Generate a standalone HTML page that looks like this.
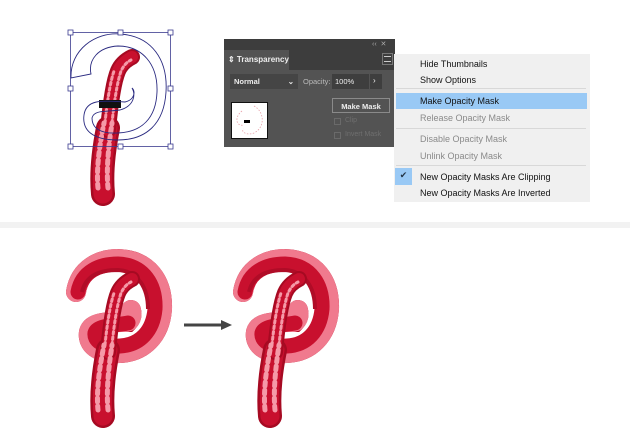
<!DOCTYPE html>
<html><head><meta charset="utf-8"><style>
*{margin:0;padding:0;box-sizing:border-box}
body{width:630px;height:444px;background:#fff;position:relative;overflow:hidden;font-family:"Liberation Sans",sans-serif}
.a{position:absolute}
.panel{left:224px;top:39px;width:171px;height:108px;background:#535353}
.menu{left:394px;top:54px;width:196px;height:148px;background:#f0f0f0;font-size:9px;color:#111}
.mi{position:absolute;left:26px}
.dis{color:#8a8a8a}
</style></head><body>
<div class="a" style="left:0;top:222px;width:630px;height:6px;background:#f2f2f2"></div>

<svg class="a" style="left:0;top:0" width="630" height="444">
<defs>
<g id="stem">
 <path d="M103,416 C101,395 104,370 108,350" fill="none" stroke="#a60a22" stroke-width="24" stroke-linecap="round"/>
 <path d="M103,416 C101,395 104,370 108,350" fill="none" stroke="#c8102e" stroke-width="19" stroke-linecap="round"/>
 <path d="M108,352 C110,330 113,305 118,293 C121,286 126,282 132,279" fill="none" stroke="#a60a22" stroke-width="16" stroke-linecap="round"/>
 <path d="M108,352 C110,330 113,305 118,293 C121,286 126,282 132,279" fill="none" stroke="#c8102e" stroke-width="12" stroke-linecap="round"/>
 <path d="M98,410 C96,390 100,365 104,345" fill="none" stroke="#f59aa8" stroke-width="5" stroke-dasharray="4 4" stroke-linecap="round"/>
 <path d="M108,410 C106,390 109,365 112,345" fill="none" stroke="#f59aa8" stroke-width="5" stroke-dasharray="4 4" stroke-linecap="round"/>
 <path d="M105,345 C107,325 110,305 114,293" fill="none" stroke="#f59aa8" stroke-width="3" stroke-dasharray="2.5 3" stroke-linecap="round"/>
 <path d="M112,345 C114,325 117,305 121,293 C124,287 127,284 131,282" fill="none" stroke="#f59aa8" stroke-width="3" stroke-dasharray="2.5 3" stroke-linecap="round"/>
</g>
<g id="loop">
 <path id="lp" d="M76,292 C80,268 100,259 118,259 C148,260 163,281 162,309 C160,336 143,352 120,353 C97,354 87,344 89,332 C92,321 110,322 128,322 C132,318 132,314 131,310" fill="none" stroke="#b80e2a" stroke-width="20" stroke-linecap="round"/>
 <path d="M76,292 C80,268 100,259 118,259 C148,260 163,281 162,309 C160,336 143,352 120,353 C97,354 87,344 89,332 C92,321 110,322 128,322 C132,318 132,314 131,310" fill="none" stroke="#f07a8e" stroke-width="20" stroke-linecap="round" stroke-dasharray="9 3"/>
 <path d="M78,292 C82,271 100,264 118,264 C144,265 156,285 155,309 C153,331 140,345 120,346 C101,347 94,340 95,333 C97,326 110,326 128,323" fill="none" stroke="#c8102e" stroke-width="15" stroke-linecap="round"/>
 <path d="M82,292 C86,275 100,270 118,270 C138,271 148,288 148,309" fill="none" stroke="#b00c27" stroke-width="4"/>
</g>
<g id="P"><use href="#loop"/><use href="#stem"/></g>
</defs>
<use href="#P"/>
<use href="#P" x="167"/>
<line x1="184" y1="325" x2="222" y2="325" stroke="#444" stroke-width="3"/>
<path d="M221,320 L232,325 L221,330 Z" fill="#444"/>
<use href="#stem" y="-222"/>
<rect x="99" y="100" width="22" height="8" fill="#111"/>
<path d="M71,78 C70,50 95,32 120,34 C152,36 168,60 166,92 C164,125 145,140 118,140 C92,140 82,130 84,115 C86,100 100,100 125,102 C134,100 136,92 132,88 C136,95 134,106 120,110 C104,112 94,110 92,118 C92,128 100,134 118,133 C142,132 156,118 157,92 C158,64 142,46 118,46 C98,47 88,60 91,74 Z" fill="none" stroke="#2a2a80" stroke-width="0.9"/>
<rect x="70.5" y="32.5" width="100" height="114" fill="none" stroke="#3b3b8f" stroke-width="0.8"/>
<g fill="#fff" stroke="#3b3b8f" stroke-width="0.8">
<rect x="68" y="30" width="5" height="5"/><rect x="118" y="30" width="5" height="5"/><rect x="168" y="30" width="5" height="5"/>
<rect x="68" y="86" width="5" height="5"/><rect x="168" y="86" width="5" height="5"/>
<rect x="68" y="144" width="5" height="5"/><rect x="118" y="144" width="5" height="5"/><rect x="168" y="144" width="5" height="5"/>
</g>
</svg>

<div class="a panel">
 <div class="a" style="left:0;top:0;width:171px;height:31px;background:#3d3d3d"></div>
 <div class="a" style="left:148px;top:1px;font-size:7px;color:#aaa">‹‹ &nbsp;✕</div>
 <div class="a" style="left:0;top:11px;width:65px;height:20px;background:#535353;color:#eee;font-size:8px;font-weight:bold;padding:5px 0 0 4px">⇕ Transparency</div>
 <div class="a" style="left:158px;top:14px;width:11px;height:12px;border:1px solid #777;background:#3d3d3d"></div>
 <div class="a" style="left:160px;top:17px;width:7px;height:6px;border-top:1px solid #ccc;border-bottom:1px solid #ccc"></div>
 <div class="a" style="left:6px;top:35px;width:68px;height:15px;background:#454545;color:#eee;font-size:7.5px;font-weight:bold;padding:3px 4px">Normal<span style="float:right">⌄</span></div>
 <div class="a" style="left:79px;top:38px;color:#bbb;font-size:7.5px">Opacity:</div>
 <div class="a" style="left:108px;top:35px;width:37px;height:15px;background:#3e3e3e;color:#eee;font-size:7.5px;padding:3px 3px">100%</div>
 <div class="a" style="left:146px;top:35px;width:12px;height:15px;background:#3e3e3e;color:#eee;font-size:8px;padding:2px 3px">›</div>
 <div class="a" style="left:7px;top:63px;width:37px;height:37px;background:#fff;border:1px solid #111"></div>
 <svg class="a" style="left:8px;top:64px" width="35" height="35"><path d="M10,8 C2,14 4,24 12,22 M22,3 C32,8 34,24 22,30 C14,33 8,28 12,26" fill="none" stroke="#e8a0a8" stroke-width="0.8" stroke-dasharray="1.5 1.5"/></svg>
 <div class="a" style="left:20px;top:81px;width:6px;height:3px;background:#000"></div>
 <div class="a" style="left:108px;top:59px;width:58px;height:15px;border:1px solid #8a8a8a;color:#eee;font-size:7.5px;font-weight:bold;text-align:center;padding-top:3px">Make Mask</div>
 <div class="a" style="left:110px;top:79px;width:7px;height:7px;border:1px solid #6a6a6a"></div>
 <div class="a" style="left:121px;top:78px;font-size:7px;color:#6f6f6f">Clip</div>
 <div class="a" style="left:110px;top:93px;width:7px;height:7px;border:1px solid #6a6a6a"></div>
 <div class="a" style="left:121px;top:92px;font-size:7px;color:#6f6f6f">Invert Mask</div>
</div>

<div class="a menu">
 <div class="mi" style="top:5px">Hide Thumbnails</div>
 <div class="mi" style="top:21px">Show Options</div>
 <div class="a" style="left:2px;top:34px;width:190px;height:1px;background:#d8d8d8"></div>
 <div class="a" style="left:2px;top:39px;width:191px;height:16px;background:#99c9f5"></div>
 <div class="mi" style="top:42px">Make Opacity Mask</div>
 <div class="mi dis" style="top:59px">Release Opacity Mask</div>
 <div class="a" style="left:2px;top:74px;width:190px;height:1px;background:#d8d8d8"></div>
 <div class="mi dis" style="top:80px">Disable Opacity Mask</div>
 <div class="mi dis" style="top:97px">Unlink Opacity Mask</div>
 <div class="a" style="left:2px;top:111px;width:190px;height:1px;background:#d8d8d8"></div>
 <div class="a" style="left:1px;top:114px;width:17px;height:17px;background:#99c9f5;text-align:center;font-size:9px;padding-top:2px;color:#234">✔</div>
 <div class="mi" style="top:118px">New Opacity Masks Are Clipping</div>
 <div class="mi" style="top:134px">New Opacity Masks Are Inverted</div>
</div>
</body></html>
